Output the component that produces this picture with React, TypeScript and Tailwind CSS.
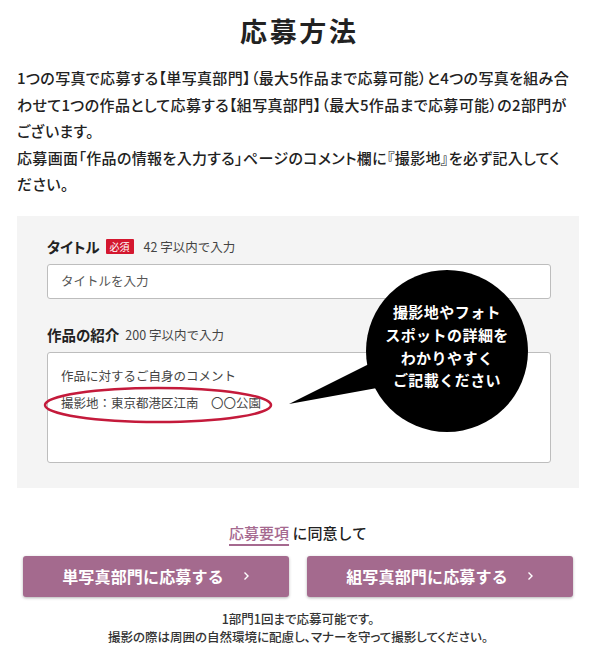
import React from 'react';

function Chevron() {
  return (
    <svg width="7" height="10" viewBox="0 0 7 10" fill="none">
      <path d="M1.5 1.5L5 5L1.5 8.5" stroke="white" strokeWidth="1.4" />
    </svg>
  );
}

export default function App() {
  const lines = [
    '1つの写真で応募する【単写真部門】（最大5作品まで応募可能）と4つの写真を組み合',
    'わせて1つの作品として応募する【組写真部門】（最大5作品まで応募可能）の2部門が',
    'ございます。',
    '応募画面「作品の情報を入力する」ページのコメント欄に『撮影地』を必ず記入してく',
    'ださい。',
  ];

  return (
    <div className="w-[596px] bg-white pb-6 text-[#222] font-['Noto_Sans_CJK_JP','Noto_Sans_CJK_SC',sans-serif]">
      <h1 className="pt-[11px] pl-[0.1em] text-center text-[27px] font-bold leading-[39px] tracking-[0.1em]">
        応募方法
      </h1>

      {/* Intro */}
      <p className="mt-[15px] px-[17px] text-[15px] font-medium leading-[26.5px] tracking-[0.35px] [font-feature-settings:'palt']">
        {lines.map((line, i) => (
          <span key={i} className="block whitespace-nowrap">
            {line}
          </span>
        ))}
      </p>

      {/* Form sample */}
      <div className="relative mx-[17px] mt-[18px] h-[272px] bg-[#f4f4f4] pl-[30px] pr-[28px] pt-[20px]">
        <div className="flex items-center leading-[21px]">
          <span className="text-[14.5px] font-bold [font-feature-settings:'palt']">タイトル</span>
          <span className="ml-[6px] h-[15px] rounded-[1px] bg-[#d4172f] px-[4px] text-[10px] leading-[15px] text-white">
            必須
          </span>
          <span className="ml-[10px] text-[12.5px] text-[#444]">42 字以内で入力</span>
        </div>
        <div className="mt-[7px] flex h-[35px] items-center rounded-[3px] border border-[#bdbdbd] bg-white pl-[13px] text-[12.5px] text-[#555]">
          タイトルを入力
        </div>

        <div className="mt-[25px] flex items-center leading-[21px]">
          <span className="text-[14.5px] font-bold [font-feature-settings:'palt']">作品の紹介</span>
          <span className="ml-[6px] text-[12.5px] text-[#444]">200 字以内で入力</span>
        </div>
        <div className="mt-[7px] h-[111px] rounded-[3px] border border-[#bdbdbd] bg-white pl-[13px] pt-[9px] text-[12.5px] leading-[27px] text-[#444]">
          <div>作品に対するご自身のコメント</div>
          <div>撮影地：東京都港区江南　〇〇公園</div>
        </div>

        {/* Callout overlay */}
        <svg className="pointer-events-none absolute inset-0" width="562" height="272" viewBox="0 0 562 272">
          <ellipse cx="141" cy="189" rx="113" ry="17" fill="none" stroke="#c41a3b" strokeWidth="2.5" />
          <polygon points="352,148 272,188 360,172" fill="#000" />
          <circle cx="430" cy="135" r="81" fill="#000" />
        </svg>
        <div className="absolute left-[349px] top-[54px] flex h-[162px] w-[162px] items-center justify-center pb-[8px] text-center text-[15px] font-bold leading-[22.7px] tracking-[0.03em] text-white">
          <div>
            撮影地やフォト
            <br />
            スポットの詳細を
            <br />
            わかりやすく
            <br />
            ご記載ください
          </div>
        </div>
      </div>

      {/* Apply */}
      <p className="mt-[34px] text-center text-[15px] font-medium leading-[22px]">
        <span className="text-[#a5698f] underline decoration-[#a5698f] decoration-2 underline-offset-[5px]">応募要項</span>
        {' '}に同意して
      </p>
      <div className="mt-[12px] flex gap-[18px] px-[23px]">
        {['単写真部門に応募する', '組写真部門に応募する'].map((label) => (
          <button
            key={label}
            className="flex h-[41px] flex-1 items-center justify-center gap-[19px] rounded-[3px] bg-[#a46a8e] text-[16px] font-bold tracking-[0.01em] text-white shadow-[0_1px_3px_rgba(0,0,0,0.3)]"
          >
            <span>{label}</span>
            <Chevron />
          </button>
        ))}
      </div>
      <p className="mt-[13px] text-center text-[12.5px] font-medium leading-[18px] text-[#333] [font-feature-settings:'palt']">
        1部門1回まで応募可能です。
        <br />
        撮影の際は周囲の自然環境に配慮し、マナーを守って撮影してください。
      </p>
    </div>
  );
}
